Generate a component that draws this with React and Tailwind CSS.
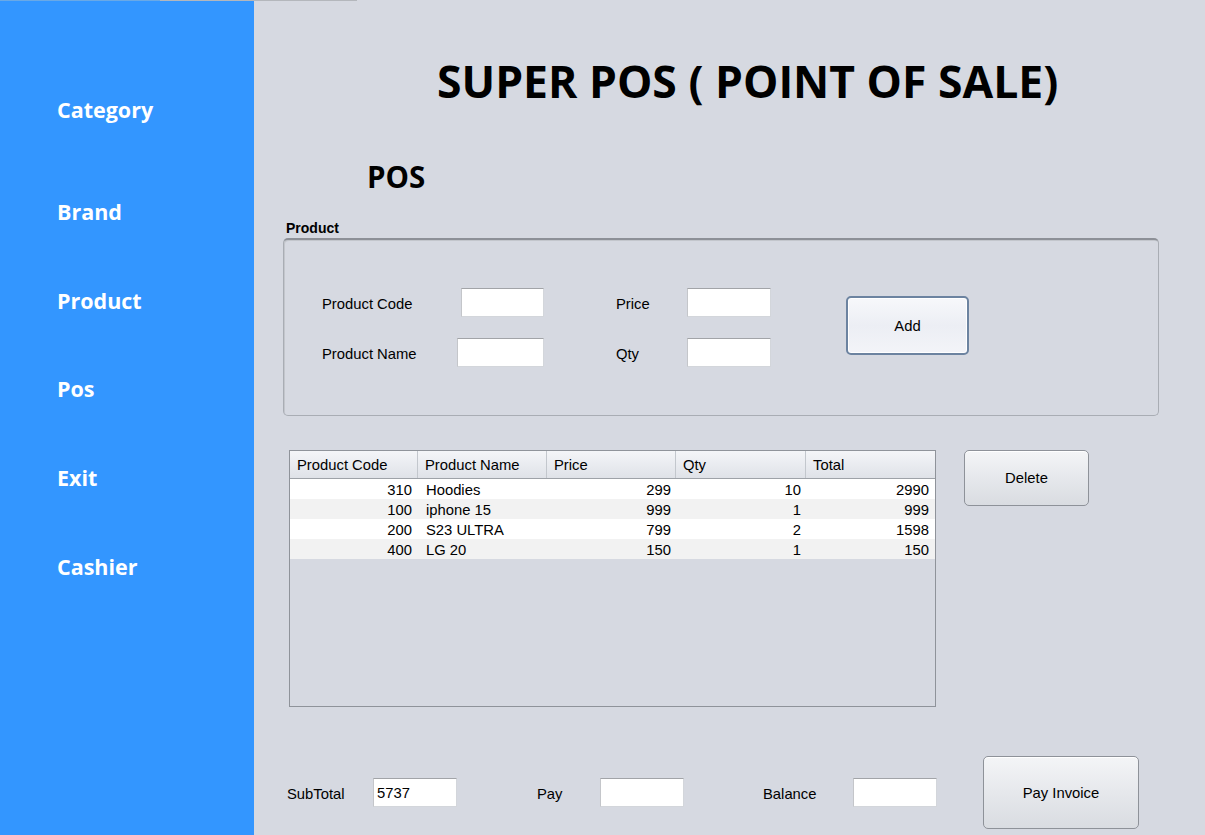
const menuItems = [
  { label: "Category", mt: "mt-[94px]" },
  { label: "Brand", mt: "mt-[72px]" },
  { label: "Product", mt: "mt-[59px]" },
  { label: "Pos", mt: "mt-[58px]" },
  { label: "Exit", mt: "mt-[59px]" },
  { label: "Cashier", mt: "mt-[59px]" },
];

const rows = [
  { code: 310, name: "Hoodies", price: 299, qty: 10, total: 2990 },
  { code: 100, name: "iphone 15", price: 999, qty: 1, total: 999 },
  { code: 200, name: "S23 ULTRA", price: 799, qty: 2, total: 1598 },
  { code: 400, name: "LG 20", price: 150, qty: 1, total: 150 },
];

const columns = [
  { title: "Product Code", w: "w-[128px]" },
  { title: "Product Name", w: "w-[129px]" },
  { title: "Price", w: "w-[129px]" },
  { title: "Qty", w: "w-[130px]" },
  { title: "Total", w: "w-[129px]" },
];

const TextBox = ({ w = "w-[84px]", value = "" }) => (
  <div
    className={`${w} h-[29px] bg-white border border-[#d3d6db] border-t-[#a2a4a8] border-l-[#c4c6ca] flex items-center px-[3px] pt-[2px] text-black`}
  >
    {value}
  </div>
);

const App = () => {
  return (
    <div className="w-[1205px] h-[835px] overflow-hidden flex flex-col bg-[#d6d9e1] font-['Liberation_Sans',Arial,sans-serif] text-[14.8px] text-black">
      {/* window top edge */}
      <div className="flex h-px shrink-0">
        <div className="w-[160px] bg-[#6aa9e6]" />
        <div className="w-[197px] bg-[#b4b7bc]" />
        <div className="flex-1 bg-[#d6d9e1]" />
      </div>

      <div className="flex flex-1">
        {/* Sidebar */}
        <div className="w-[254px] bg-[#3396ff] flex flex-col pl-[57px] font-['Open_Sans',sans-serif] font-bold text-white text-[21.5px]">
          {menuItems.map((item) => (
            <div key={item.label} className={`${item.mt} h-[30px] flex items-center leading-none`}>
              {item.label}
            </div>
          ))}
        </div>

        {/* Main */}
        <div className="flex-1 flex flex-col">
          <div className="mt-[52px] h-[56px] pl-[183px] flex items-center font-['Open_Sans',sans-serif] font-bold text-[44.5px] leading-none">
            SUPER POS ( POINT OF SALE)
          </div>

          <div className="mt-[50px] h-[36px] pl-[113px] flex items-center font-['Open_Sans',sans-serif] font-bold text-[29.5px] leading-none">
            POS
          </div>

          <div className="mt-[25px] h-[16px] pl-[32px] flex items-center font-bold text-[14px] leading-none">
            Product
          </div>

          {/* Product fieldset */}
          <div className="mt-[2px] ml-[29px] w-[876px] h-[178px] rounded-[5px] border border-[#a9adb4] border-t-[#8d9097] border-t-2 shadow-[inset_1px_1px_0_#c3c6cc] flex">
            <div className="flex flex-col pl-[38px] pt-[48px] gap-[21px]">
              <div className="flex items-center h-[29px]">
                <span className="w-[139px] pt-[4px]">Product Code</span>
                <TextBox w="w-[83px]" />
                <span className="ml-[72px] w-[71px] pt-[4px]">Price</span>
                <TextBox w="w-[84px]" />
              </div>
              <div className="flex items-center h-[29px]">
                <span className="w-[135px] pt-[4px]">Product Name</span>
                <TextBox w="w-[87px]" />
                <span className="ml-[72px] w-[71px] pt-[4px]">Qty</span>
                <TextBox w="w-[84px]" />
              </div>
            </div>
            <div className="pt-[56px] ml-[75px]">
              <button className="w-[123px] h-[59px] rounded-[5px] border-2 border-[#6c83a0] bg-gradient-to-b from-[#f7f8fb] via-[#eceef4] to-[#f3f4f8] shadow-[inset_0_0_0_1px_#ffffff] pt-[2px]">
                Add
              </button>
            </div>
          </div>

          {/* Table + Delete */}
          <div className="mt-[34px] ml-[35px] flex">
            <div className="w-[647px] h-[257px] border border-[#8f939a] bg-[#d6d9e1] flex flex-col">
              <div className="flex h-[28px] border-b border-[#9ea2a8] bg-gradient-to-b from-[#f4f5f8] to-[#dfe2e8]">
                {columns.map((c) => (
                  <div
                    key={c.title}
                    className={`${c.w} h-full flex items-center pl-[7px] pt-[2px] border-r border-[#c3c7cd] last:border-r-0`}
                  >
                    {c.title}
                  </div>
                ))}
              </div>
              {rows.map((r, i) => (
                <div
                  key={r.code}
                  className={`flex h-[20px] items-center pt-[2px] ${i % 2 === 0 ? "bg-white" : "bg-[#f2f2f2]"}`}
                >
                  <div className="w-[128px] text-right pr-[6px]">{r.code}</div>
                  <div className="w-[129px] pl-[8px]">{r.name}</div>
                  <div className="w-[129px] text-right pr-[5px]">{r.price}</div>
                  <div className="w-[130px] text-right pr-[5px]">{r.qty}</div>
                  <div className="w-[129px] text-right pr-[6px]">{r.total}</div>
                </div>
              ))}
            </div>
            <div className="ml-[28px]">
              <button className="w-[125px] h-[56px] rounded-[5px] border border-[#8e9299] bg-gradient-to-b from-[#f4f5f7] via-[#e6e8ec] to-[#d9dce1] shadow-[inset_0_1px_0_#ffffff]">
                Delete
              </button>
            </div>
          </div>

          {/* Bottom totals */}
          <div className="mt-[49px] ml-[33px] h-[73px] flex items-center">
            <span className="w-[86px] pt-[3px]">SubTotal</span>
            <TextBox value="5737" />
            <span className="ml-[80px] w-[63px] pt-[3px]">Pay</span>
            <TextBox />
            <span className="ml-[79px] w-[90px] pt-[3px]">Balance</span>
            <TextBox />
            <button className="ml-[46px] w-[156px] h-[73px] rounded-[5px] border border-[#8e9299] bg-gradient-to-b from-[#f4f5f7] via-[#e6e8ec] to-[#d9dce1] shadow-[inset_0_1px_0_#ffffff] pt-[2px]">
              Pay Invoice
            </button>
          </div>
        </div>
      </div>
    </div>
  );
};

export default App;
